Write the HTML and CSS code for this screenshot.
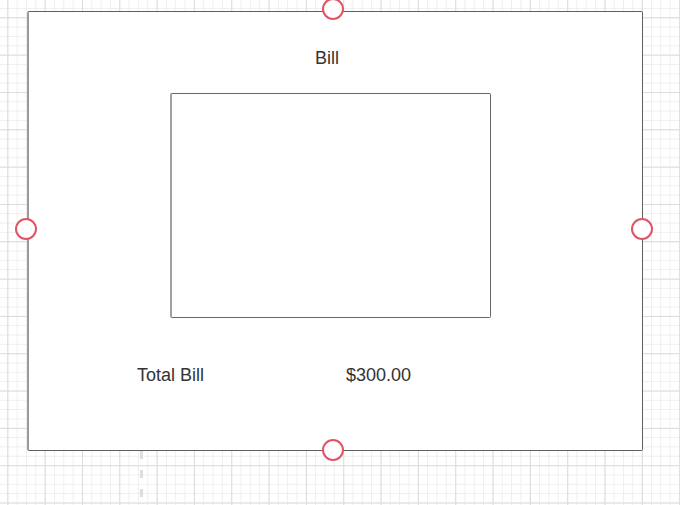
FILE: index.html
```html
<!DOCTYPE html>
<html lang="en">
<head>
    <meta charset="UTF-8">
    <meta name="viewport" content="width=device-width, initial-scale=1.0">
    <title>Bill</title>
    <link rel="stylesheet" href="styles.css">
</head>
<body>
    <div class="canvas">
        <!-- dashed connector under the card -->
        <div class="connector"></div>

        <!-- bill card -->
        <div class="card">
            <div class="card-title">Bill</div>
            <div class="preview"></div>
            <div class="total-row">
                <span class="total-label">Total Bill</span>
                <span class="total-value">$300.00</span>
            </div>
        </div>

        <!-- resize handles -->
        <span class="handle handle-top"></span>
        <span class="handle handle-left"></span>
        <span class="handle handle-right"></span>
        <span class="handle handle-bottom"></span>
    </div>
</body>
</html>
```

FILE: styles.css
```css
* {
    margin: 0;
    padding: 0;
    box-sizing: border-box;
    font-family: "Liberation Sans", Arial, sans-serif;
}

body {
    width: 680px;
    height: 505px;
    overflow: hidden;
    background-color: #fff;
    background-image:
        linear-gradient(to right, #dcdcdc 1px, transparent 1px),
        linear-gradient(to bottom, #dcdcdc 1px, transparent 1px),
        linear-gradient(to right, #eeeeee 1px, transparent 1px),
        linear-gradient(to bottom, #eeeeee 1px, transparent 1px);
    background-size:
        37.33px 37.33px,
        37.33px 37.33px,
        9.333px 9.333px,
        9.333px 9.333px;
    background-position:
        7.33px 17.33px,
        7.33px 17.33px,
        7.33px 8px,
        7.33px 8px;
}

.canvas {
    position: relative;
    width: 680px;
    height: 505px;
}

.connector {
    position: absolute;
    left: 140px;
    top: 451px;
    width: 3px;
    height: 54px;
    background: repeating-linear-gradient(to bottom, #dddddd 0, #dddddd 8px, transparent 8px, transparent 19px);
}

.card {
    position: absolute;
    left: 27px;
    top: 11px;
    width: 616px;
    height: 440px;
    background: #fff;
    border: 1px solid #5f5f5f;
    border-left: 2px solid #9a9a9a;
    border-radius: 2px;
    display: flex;
    flex-direction: column;
    align-items: flex-start;
    padding: 36px 0 0 141px;
    color: #333;
}

.card-title {
    width: 320px;
    padding-right: 6px;
    font-size: 18px;
    line-height: 20px;
    text-align: center;
}

.preview {
    width: 321px;
    height: 225px;
    margin-top: 25px;
    border: 1px solid #666;
    border-left: 2px solid #a0a0a0;
    border-radius: 2px;
}

.total-row {
    display: flex;
    margin-top: 47px;
    margin-left: -33px;
    font-size: 18px;
    line-height: 20px;
}

.total-label {
    width: 209px;
}

.handle {
    position: absolute;
    width: 22px;
    height: 22px;
    border: 2px solid #e05566;
    border-radius: 50%;
    background: #fff;
}

.handle-top {
    left: 322px;
    top: -2px;
}

.handle-left {
    left: 15px;
    top: 218px;
}

.handle-right {
    left: 631px;
    top: 218px;
}

.handle-bottom {
    left: 322px;
    top: 439px;
}
```
